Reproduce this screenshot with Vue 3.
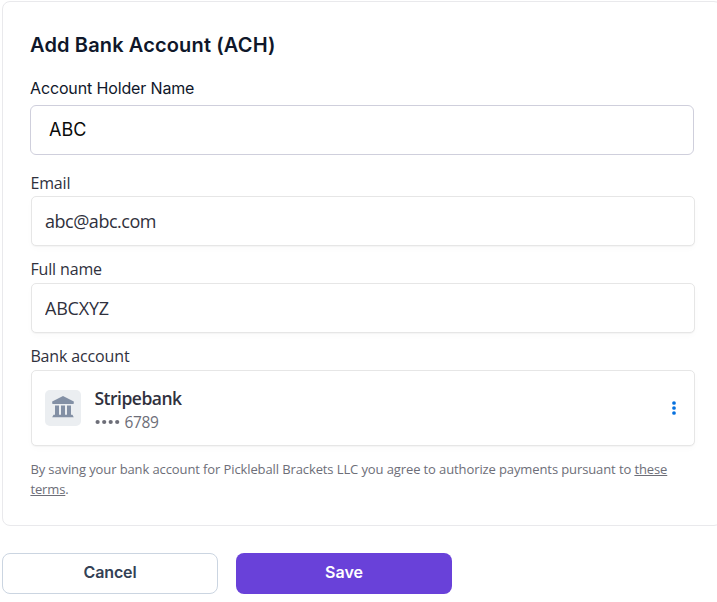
<script setup>
import { ref } from 'vue'

const holder = ref('ABC')
const email = ref('abc@abc.com')
const fullName = ref('ABCXYZ')
</script>

<template>
  <main class="page">
    <section class="card">
      <h1 class="title">Add Bank Account (ACH)</h1>
      <label class="holder-label" for="holder">Account Holder Name</label>
      <input id="holder" v-model="holder" class="holder-input" />

      <div class="payment">
        <div class="field">
          <label class="label email-label" for="email">Email</label>
          <input id="email" v-model="email" class="box input email-input" />
        </div>
        <div class="field">
          <label class="label full-label" for="full">Full name</label>
          <input id="full" v-model="fullName" class="box input full-input" />
        </div>
        <div class="field">
          <span class="label bank-label">Bank account</span>
          <div class="box bank">
            <svg class="bank-icon" width="36" height="36" viewBox="0 0 36 36">
              <rect width="36" height="36" rx="5" fill="#ebeef1" />
              <g fill="#8390a5">
                <path d="M18 6 28.8 11.4V13.2Q28.8 14 28 14H8Q7.2 14 7.2 13.2V11.4Z" />
                <path d="M10 15.4h4v10h-4zM16 15.4h4v10h-4zM22 15.4h4v10h-4z" />
                <path d="M8.6 24.7h18.8l1.4 2.5H7.2Z" />
              </g>
            </svg>
            <div class="bank-text">
              <span class="bank-name">Stripebank</span>
              <span class="bank-number">
                <svg width="25" height="6" viewBox="0 0 25 6" fill="#6d6e78">
                  <circle cx="2.6" cy="3" r="2.1" />
                  <circle cx="9.2" cy="3" r="2.1" />
                  <circle cx="15.7" cy="3" r="2.1" />
                  <circle cx="22.2" cy="3" r="2.1" />
                </svg>
                <span class="digits">6789</span>
              </span>
            </div>
            <svg class="more" width="4" height="14" viewBox="0 0 4 14" fill="#0570de">
              <circle cx="2" cy="2" r="1.85" />
              <circle cx="2" cy="7" r="1.85" />
              <circle cx="2" cy="12" r="1.85" />
            </svg>
          </div>
        </div>
        <p class="terms">
          <span class="terms-line">By saving your bank account for Pickleball Brackets LLC you agree to authorize payments pursuant to <a>these</a></span>
          <br /><a>terms</a>.
        </p>
      </div>
    </section>

    <div class="actions">
      <button class="button cancel">Cancel</button>
      <button class="button save">Save</button>
    </div>
  </main>
</template>

<style>
body {
  background: #fff;
  overflow: hidden;
}
</style>

<style scoped>
.page {
  width: 717px;
  height: 602px;
  padding: 1px 0 0 2px;
  box-sizing: border-box;
  overflow: hidden;
  font-family: Inter, sans-serif;
}

.page *,
.page *::before {
  box-sizing: border-box;
}

.card {
  width: 720px;
  height: 525px;
  padding: 29px 27px 0;
  border: 1px solid #e9e9ec;
  border-radius: 8px;
  display: flex;
  flex-direction: column;
}

.title {
  margin: 0;
  font-size: 20px;
  line-height: 28px;
  font-weight: 600;
  letter-spacing: 0.14px;
  color: #0f172a;
}

.holder-label {
  margin-top: 17px;
  font-size: 16px;
  line-height: 24px;
  letter-spacing: -0.14px;
  color: #0f172a;
}

.holder-input {
  width: 664px;
  height: 50px;
  margin-top: 5px;
  padding: 0 18px 2px;
  border: 1px solid #cfcfdc;
  border-radius: 6px;
  background: #fff;
  font: 18px/28px Inter, sans-serif;
  color: #0a0a0a;
  outline: none;
}

.payment {
  display: flex;
  flex-direction: column;
  margin-top: 17px;
  font-family: "Open Sans", "Noto Sans", sans-serif;
  color: #30313d;
}

.field {
  display: flex;
  flex-direction: column;
  padding-left: 1px;
  margin-bottom: 12px;
}

.label {
  height: 24px;
  margin-left: -0.6px;
  font-size: 16px;
  line-height: 23px;
  letter-spacing: -0.14px;
  white-space: nowrap;
}

.box {
  width: 664px;
  height: 50px;
  border: 1px solid #e6e6e6;
  border-radius: 5px;
  background: #fff;
  box-shadow: 0 1px 1px rgba(0, 0, 0, 0.03), 0 3px 6px rgba(0, 0, 0, 0.02);
}

.input {
  padding: 0 13px 1px;
  font: 18px/24px "Open Sans", "Noto Sans", sans-serif;
  color: #30313d;
  outline: none;
}

.email-input {
  letter-spacing: -0.48px;
}

.full-input {
  letter-spacing: -0.2px;
}

.full-label,
.bank-label {
  height: 25px;
}

.bank {
  height: 76px;
  padding: 0 18px 0 13px;
  display: flex;
  align-items: center;
}

.bank-text {
  display: flex;
  flex-direction: column;
  flex: 1;
  margin-left: 13.5px;
  padding-top: 2px;
}

.bank-name {
  font-size: 17.5px;
  line-height: 25px;
  font-weight: 600;
  letter-spacing: -0.5px;
}

.bank-number {
  display: flex;
  align-items: center;
  gap: 5px;
  font-size: 15.5px;
  line-height: 22px;
  letter-spacing: -0.4px;
  color: #6d6e78;
}

.terms {
  margin: 1px 0 0 0.4px;
  font-size: 13px;
  line-height: 20px;
  letter-spacing: -0.108px;
  color: #6d6e78;
}

.terms-line {
  white-space: nowrap;
}

.terms a {
  text-decoration: underline;
  text-underline-offset: 1px;
}

.actions {
  display: flex;
  gap: 18px;
  margin-top: 27px;
}

.button {
  width: 216px;
  height: 41px;
  padding: 0 0 3px;
  border-radius: 8px;
  font: 600 16px/24px Inter, sans-serif;
}

.cancel {
  border: 1px solid #cbd5e1;
  background: #fff;
  color: #334155;
  letter-spacing: -0.14px;
}

.save {
  border: 0;
  background: #6941d9;
  color: #fff;
}
</style>
